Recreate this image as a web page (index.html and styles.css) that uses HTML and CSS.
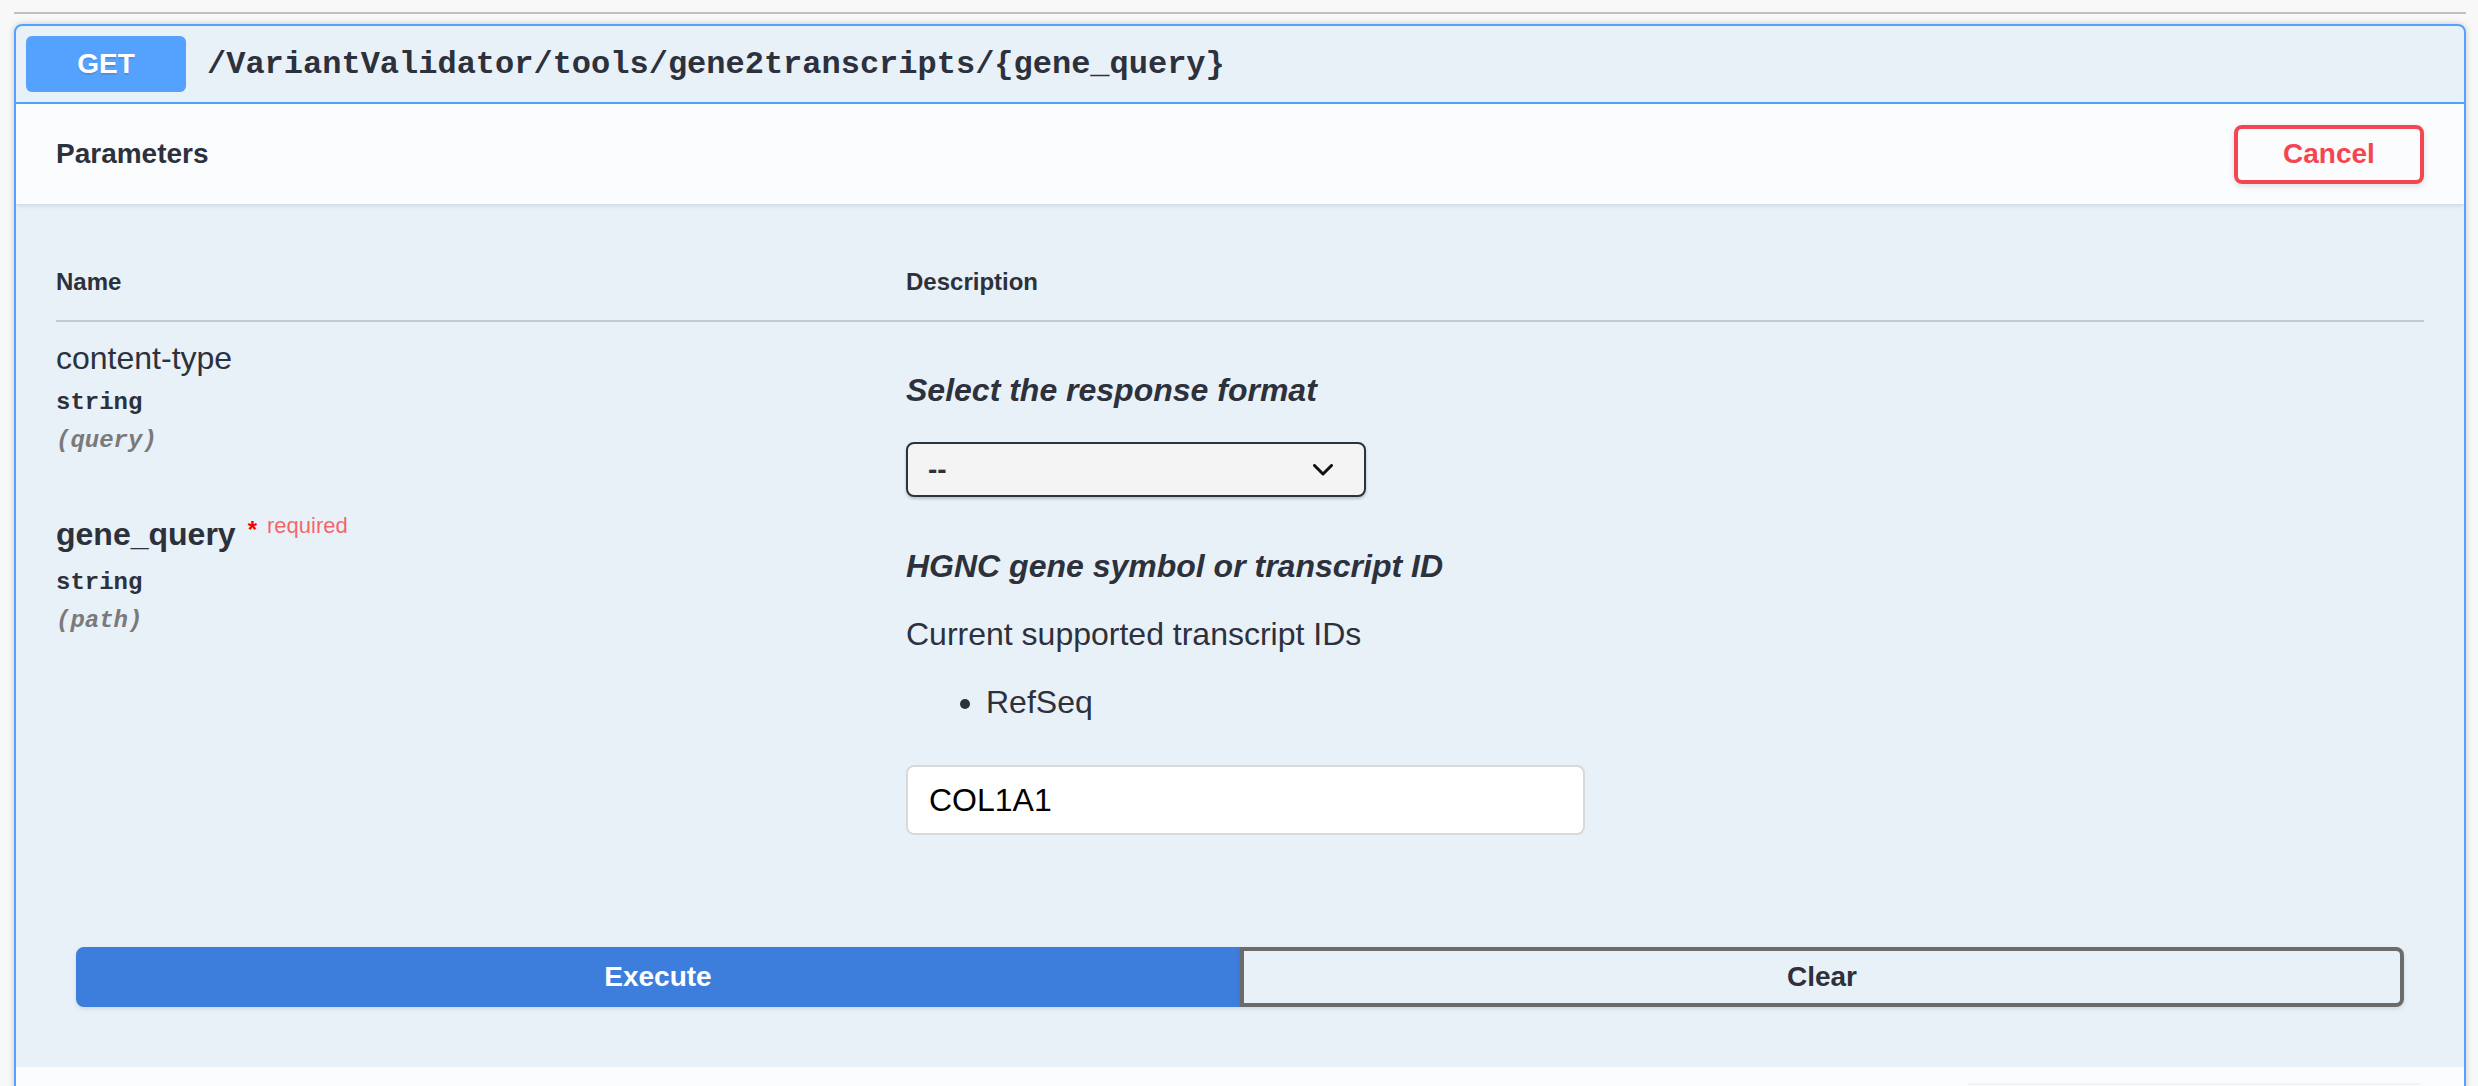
FILE: index.html
```html
<!DOCTYPE html>
<html lang="en">
<head>
<meta charset="utf-8">
<title>gene2transcripts</title>
<link rel="stylesheet" href="styles.css">
</head>
<body>
<div class="page">
  <div class="tag-line"></div>
  <div class="opblock">
    <div class="summary">
      <span class="method">GET</span>
      <span class="path">/VariantValidator/tools/gene2transcripts/{gene_query}</span>
    </div>
    <div class="section-header">
      <h4 class="section-title">Parameters</h4>
      <button class="btn-cancel" type="button">Cancel</button>
    </div>
    <div class="params">
      <div class="params-head">
        <div class="col-head">Name</div>
        <div class="col-head">Description</div>
      </div>
      <div class="param-row">
        <div class="name-cell">
          <div class="pname">content-type</div>
          <div class="ptype">string</div>
          <div class="pin">(query)</div>
        </div>
        <div class="desc-cell">
          <p class="desc-title">Select the response format</p>
          <div class="select">
            <span class="select-value">--</span>
            <svg class="chevron" width="20" height="12" viewBox="0 0 20 12"><path d="M1.5 1.5 L10 10 L18.5 1.5" fill="none" stroke="#111" stroke-width="3" stroke-linecap="round" stroke-linejoin="round"/></svg>
          </div>
        </div>
      </div>
      <div class="param-row">
        <div class="name-cell">
          <div class="pname required">gene_query<span class="star">*</span><span class="req-label">required</span></div>
          <div class="ptype">string</div>
          <div class="pin">(path)</div>
        </div>
        <div class="desc-cell">
          <p class="desc-title">HGNC gene symbol or transcript ID</p>
          <p class="desc-text">Current supported transcript IDs</p>
          <ul class="desc-list">
            <li>RefSeq</li>
          </ul>
          <input class="text-input" type="text" value="COL1A1">
        </div>
      </div>
    </div>
    <div class="btn-group">
      <button class="btn btn-execute" type="button">Execute</button>
      <button class="btn btn-clear" type="button">Clear</button>
    </div>
    <div class="responses-header">
      <div class="resp-ctrl"></div>
    </div>
  </div>
</div>
</body>
</html>
```

FILE: styles.css
```css
html, body {
  margin: 0;
  padding: 0;
  background: #f8f8f8;
  height: 100%;
  overflow: hidden;
}

.page {
  padding: 12px 12px 0 14px;
  font-family: "Liberation Sans", Arial, sans-serif;
  color: #303642;
}

.tag-line {
  height: 2px;
  background: #bfc1c6;
}

.opblock {
  margin-top: 10px;
  border: 2px solid #55a1fe;
  border-radius: 8px;
  background: rgba(97, 175, 254, 0.1);
  box-shadow: 0 0 6px rgba(0, 0, 0, 0.19);
  overflow: hidden;
}

.summary {
  display: flex;
  align-items: center;
  padding: 10px;
  border-bottom: 2px solid #55a1fe;
}

.method {
  width: 160px;
  height: 56px;
  display: flex;
  align-items: center;
  justify-content: center;
  background: #55a1fe;
  border-radius: 6px;
  color: #fff;
  font-size: 28px;
  font-weight: 700;
  text-shadow: 0 2px 0 rgba(0, 0, 0, 0.1);
}

.path {
  margin-left: 21px;
  font-family: "Liberation Mono", "Courier New", monospace;
  font-weight: 700;
  font-size: 32px;
  color: #2c313c;
}

.section-header {
  display: flex;
  align-items: center;
  justify-content: space-between;
  height: 100px;
  box-sizing: border-box;
  padding: 0 40px;
  background: rgba(255, 255, 255, 0.8);
  box-shadow: 0 2px 4px rgba(0, 0, 0, 0.1);
  position: relative;
}

.section-title {
  margin: 0;
  font-size: 28px;
  font-weight: 700;
  color: #2c313c;
}

.btn-cancel {
  width: 190px;
  height: 59px;
  box-sizing: border-box;
  border: 4px solid #f44650;
  border-radius: 8px;
  background: transparent;
  color: #f44650;
  font-family: "Liberation Sans", Arial, sans-serif;
  font-size: 28px;
  font-weight: 700;
  box-shadow: 0 2px 6px rgba(0, 0, 0, 0.12);
  padding: 0;
}

.params {
  padding: 0 40px;
}

.params-head {
  display: grid;
  grid-template-columns: 850px 1fr;
  padding: 63px 0 23px;
  border-bottom: 2px solid #c5c9d0;
}

.col-head {
  font-size: 24px;
  line-height: 30px;
  font-weight: 700;
  color: #2c313c;
}

.param-row {
  display: grid;
  grid-template-columns: 850px 1fr;
}

.name-cell {
  padding-top: 16px;
}

.pname {
  font-size: 32px;
  line-height: 40px;
  color: #2c313c;
}

.pname.required {
  font-weight: 700;
}

.star {
  color: #ff0000;
  font-size: 24px;
  position: relative;
  top: -7px;
  padding-left: 12px;
}

.req-label {
  color: rgba(255, 0, 0, 0.6);
  font-size: 22px;
  font-weight: 400;
  position: relative;
  top: -12px;
  padding-left: 10px;
}

.ptype {
  margin-top: 10px;
  font-family: "Liberation Mono", "Courier New", monospace;
  font-weight: 700;
  font-size: 24px;
  line-height: 30px;
  color: #2c313c;
}

.pin {
  margin-top: 8px;
  font-family: "Liberation Mono", "Courier New", monospace;
  font-weight: 700;
  font-style: italic;
  font-size: 24px;
  line-height: 30px;
  color: #7a7a7a;
}

.desc-cell {
  padding-top: 48px;
  padding-bottom: 1px;
}

.desc-title {
  margin: 0;
  font-size: 32px;
  line-height: 40px;
  font-weight: 700;
  font-style: italic;
  color: #2c313c;
}

.select {
  margin-top: 32px;
  width: 460px;
  height: 55px;
  box-sizing: border-box;
  border: 2px solid #2e323c;
  border-radius: 8px;
  background: #f4f4f4;
  box-shadow: 0 2px 3px rgba(0, 0, 0, 0.2);
  display: flex;
  align-items: center;
  justify-content: space-between;
  padding: 0 31px 0 20px;
}

.select-value {
  font-size: 28px;
  font-weight: 700;
  color: #2c313c;
}

.chevron {
  display: block;
}

.desc-text {
  margin: 28px 0 0;
  font-size: 32px;
  line-height: 40px;
  color: #2c313c;
}

.desc-list {
  margin: 28px 0 0;
  padding-left: 80px;
  font-size: 32px;
  line-height: 40px;
  color: #2c313c;
}

.text-input {
  display: block;
  margin-top: 43px;
  width: 679px;
  height: 70px;
  box-sizing: border-box;
  border: 2px solid #d9d9d9;
  border-radius: 8px;
  background: #fff;
  padding: 0 21px;
  font-family: "Liberation Sans", Arial, sans-serif;
  font-size: 32px;
  color: #000;
  outline: none;
}

.btn-group {
  display: flex;
  margin-top: 111px;
  padding: 0 60px 60px;
}

.btn {
  flex: 1;
  height: 60px;
  box-sizing: border-box;
  font-family: "Liberation Sans", Arial, sans-serif;
  font-size: 28px;
  font-weight: 700;
  padding: 0;
  box-shadow: 0 2px 4px rgba(0, 0, 0, 0.1);
}

.btn-execute {
  background: #3d7edd;
  border: 4px solid #3d7edd;
  border-radius: 8px 0 0 8px;
  color: #fff;
}

.btn-clear {
  background: transparent;
  border: 4px solid #6b6b6b;
  border-radius: 0 8px 8px 0;
  color: #2c313c;
}

.responses-header {
  background: rgba(255, 255, 255, 0.8);
  height: 100px;
  padding: 17px 44px 0 0;
  display: flex;
  justify-content: flex-end;
}

.resp-ctrl {
  width: 452px;
  height: 50px;
  border-top: 1px solid #efefef;
  box-shadow: 0 -1px 2px rgba(0, 0, 0, 0.03);
}
```
